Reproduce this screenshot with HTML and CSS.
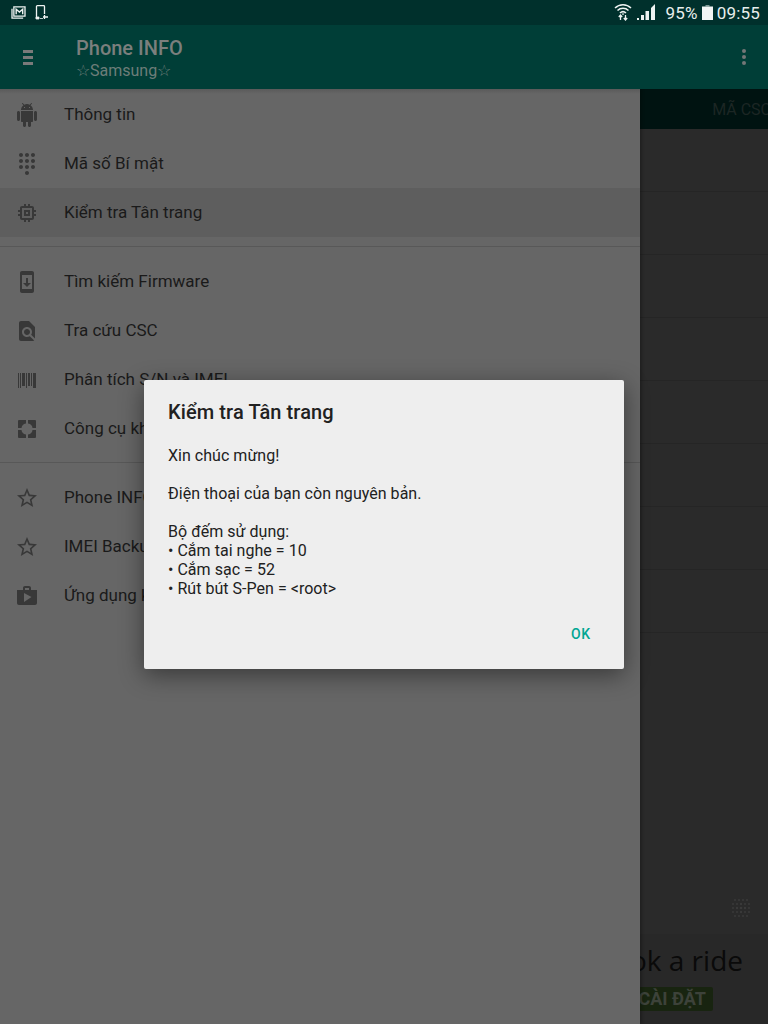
FILE: index.html
```html
<!DOCTYPE html>
<html lang="vi">
<head>
<meta charset="utf-8">
<title>Phone INFO</title>
<link rel="stylesheet" href="styles.css">
</head>
<body>
<div class="screen">
  <header class="status">
    <div class="status-left">
      <svg class="st-mail" viewBox="0 0 16 14"><path d="M3 1h12v10H3z M1 3v10h12" fill="none" stroke="#eef3f2" stroke-width="1.4"/><path d="M5.5 9V3.5L9 6.5l3.5-3V9" fill="none" stroke="#eef3f2" stroke-width="1.5"/></svg>
      <svg class="st-dev" viewBox="0 0 14 15"><path d="M1.5 13.5V1.500a.8.8 0 0 1 .8-.8h6.400a.8.8 0 0 1 .8.800V9" fill="none" stroke="#eef3f2" stroke-width="1.3"/><path d="M1 12h3v2H1z M5 13.500h3" stroke="#eef3f2" fill="#eef3f2" stroke-width=".8"/><path d="M9.500 10v4M8 12h5" stroke="#eef3f2" stroke-width="1.3" fill="none"/></svg>
    </div>
    <div class="status-right">
      <svg class="st-wifi" viewBox="0 0 18 18"><g fill="none" stroke="#eef3f2" stroke-width="1.500"><path d="M1 5c4.500-4.500 11.500-4.500 16 0"/><path d="M3.500 7.500c3-3 8-3 11 0"/><path d="M6 10c1.700-1.600 4.300-1.600 6 0"/></g><path d="M7.500 10.500h3L9 12.300z" fill="#eef3f2"/><path d="M6.500 12v5M4.800 14l1.700-2 1.700 2M11.500 12v5M9.800 15l1.700 2 1.700-2" fill="none" stroke="#eef3f2" stroke-width="1.300"/></svg>
      <svg class="st-signal" viewBox="0 0 18 16"><path d="M0 16h2v-2H0zM4 16h3v-5H4zM8.500 16h3.500V7H8.500zM14 16h4V0l-4 4z" fill="#eef3f2"/></svg>
      <span class="pct">95%</span>
      <svg class="st-batt" viewBox="0 0 11 15"><path d="M3.500 0h4v1.500h-4z" fill="#7f9a96"/><path d="M0 1.500h11V15H0z" fill="#f2f5f4"/></svg>
      <span class="clock">09:55</span>
    </div>
  </header>
  <div class="toolbar">
    <div class="burger"><i></i><i></i><i></i></div>
    <div class="titles">
      <div class="app-title">Phone INFO</div>
      <div class="app-sub">☆Samsung☆</div>
    </div>
    <div class="kebab"><i></i><i></i><i></i></div>
  </div>
  <div class="main">
    <nav class="drawer">
      <a class="item"><svg class="ic" viewBox="0 0 24 24"><path d="M6 18c0 .55.45 1 1 1h1v3.500c0 .83.67 1.500 1.500 1.500s1.500-.67 1.500-1.500V19h2v3.500c0 .83.67 1.500 1.500 1.500s1.500-.67 1.500-1.500V19h1c.55 0 1-.45 1-1V8H6v10zM3.500 8C2.670 8 2 8.670 2 9.500v7c0 .83.67 1.500 1.500 1.500S5 17.330 5 16.500v-7C5 8.670 4.330 8 3.500 8zm17 0c-.83 0-1.500.67-1.500 1.500v7c0 .83.67 1.500 1.500 1.500s1.500-.67 1.500-1.500v-7c0-.83-.67-1.500-1.500-1.500zm-4.970-5.840l1.300-1.300c.2-.2.2-.51 0-.71-.2-.2-.51-.2-.71 0l-1.480 1.480C13.850 1.230 12.950 1 12 1c-.96 0-1.860.23-2.660.63L7.850.15c-.2-.2-.51-.2-.71 0-.2.2-.2.51 0 .71l1.310 1.310C6.970 3.260 6 5.010 6 7h12c0-1.990-.97-3.750-2.470-4.840zM10 5H9V4h1v1zm5 0h-1V4h1v1z"/></svg><span>Thông tin</span></a>
      <a class="item"><svg class="ic" viewBox="0 0 24 24"><path d="M12 19c-1.100 0-2 .9-2 2s.9 2 2 2 2-.9 2-2-.9-2-2-2zM6 1c-1.100 0-2 .9-2 2s.9 2 2 2 2-.9 2-2-.9-2-2-2zm0 6c-1.100 0-2 .9-2 2s.9 2 2 2 2-.9 2-2-.9-2-2-2zm0 6c-1.100 0-2 .9-2 2s.9 2 2 2 2-.9 2-2-.9-2-2-2zm12-8c1.100 0 2-.9 2-2s-.9-2-2-2-2 .9-2 2 .9 2 2 2zm-6 8c-1.100 0-2 .9-2 2s.9 2 2 2 2-.9 2-2-.9-2-2-2zm6 0c-1.100 0-2 .9-2 2s.9 2 2 2 2-.9 2-2-.9-2-2-2zm0-6c-1.100 0-2 .9-2 2s.9 2 2 2 2-.9 2-2-.9-2-2-2zm-6 0c-1.100 0-2 .9-2 2s.9 2 2 2 2-.9 2-2-.9-2-2-2zm0-6c-1.100 0-2 .9-2 2s.9 2 2 2 2-.9 2-2-.9-2-2-2z"/></svg><span>Mã số Bí mật</span></a>
      <a class="item active"><svg class="ic" viewBox="0 0 24 24"><path d="M15 9H9v6h6V9zm-2 4h-2v-2h2v2zm8-2V9h-2V7c0-1.100-.9-2-2-2h-2V3h-2v2h-2V3H9v2H7c-1.100 0-2 .9-2 2v2H3v2h2v2H3v2h2v2c0 1.100.9 2 2 2h2v2h2v-2h2v2h2v-2h2c1.100 0 2-.9 2-2v-2h2v-2h-2v-2h2zm-4 6H7V7h10v10z"/></svg><span>Kiểm tra Tân trang</span></a>
      <div class="divider"></div>
      <a class="item"><svg class="ic" viewBox="0 0 24 24"><path fill-rule="evenodd" d="M7 1h10c1.100 0 2 .9 2 2v18c0 1.100-.9 2-2 2H7c-1.100 0-2-.9-2-2V3c0-1.100.9-2 2-2zM7 5v14h10V5z"/><path d="M11 8h2v5h3l-4 4-4-4h3z"/></svg><span>Tìm kiếm Firmware</span></a>
      <a class="item"><svg class="ic" viewBox="0 0 24 24"><path d="M20 19.590V8l-6-6H6c-1.100 0-1.990.9-1.990 2L4 20c0 1.100.89 2 1.990 2H18c.45 0 .85-.15 1.190-.4l-4.430-4.430c-.8.52-1.740.83-2.760.83-2.760 0-5-2.240-5-5s2.240-5 5-5 5 2.240 5 5c0 1.020-.31 1.960-.83 2.750L20 19.590zM9 13c0 1.660 1.340 3 3 3s3-1.340 3-3-1.340-3-3-3-3 1.340-3 3z"/></svg><span>Tra cứu CSC</span></a>
      <a class="item"><svg class="ic" viewBox="0 0 24 24"><path d="M3 5h1v15H3zM5 5h1v15H5zM7 5h3v13H7zM11 5h1v15h-1zM13 5h2v13h-2zM16 5h1v13h-1zM18 5h3v15h-3z"/></svg><span>Phân tích S/N và IMEI</span></a>
      <a class="item"><svg class="ic" viewBox="0 0 24 24"><path d="M4 3h7v3.500L9 7 7 9l-.5 2H3V4a1 1 0 0 1 1-1zM13 3h7a1 1 0 0 1 1 1v7h-3.500L17 9l-2-2-2-.5zM3 13h3.500L7 15l2 2 2 .5V21H4a1 1 0 0 1-1-1zM17.500 13H21v7a1 1 0 0 1-1 1h-7v-3.500l2-.5 2-2z"/></svg><span>Công cụ khác</span></a>
      <div class="divider low"></div>
      <a class="item"><svg class="ic" viewBox="0 0 24 24"><path d="M22 9.240l-7.190-.62L12 2 9.190 8.630 2 9.240l5.460 4.730L5.820 21 12 17.270 18.180 21l-1.630-7.030L22 9.240zM12 15.400l-3.760 2.270 1-4.280-3.320-2.880 4.380-.38L12 6.100l1.710 4.040 4.380.38-3.320 2.880 1 4.280L12 15.400z"/></svg><span>Phone INFO</span></a>
      <a class="item"><svg class="ic" viewBox="0 0 24 24"><path d="M22 9.240l-7.190-.62L12 2 9.190 8.630 2 9.240l5.460 4.730L5.820 21 12 17.270 18.180 21l-1.630-7.030L22 9.240zM12 15.400l-3.760 2.270 1-4.280-3.320-2.880 4.380-.38L12 6.100l1.710 4.040 4.380.38-3.320 2.880 1 4.280L12 15.400z"/></svg><span>IMEI Backup</span></a>
      <a class="item"><svg class="ic" viewBox="0 0 24 24"><path d="M16 6V4c0-1.110-.89-2-2-2h-4c-1.110 0-2 .89-2 2v2H2v13c0 1.110.89 2 2 2h16c1.110 0 2-.89 2-2V6h-6zm-6-2h4v2h-4V4zM9 18V9l7.500 4L9 18z"/></svg><span>Ứng dụng khác</span></a>
    </nav>
    <section class="panel">
      <div class="tabs"><span>MÃ CSC</span></div>
      <div class="rows">
        <div class="row"></div><div class="row"></div><div class="row"></div><div class="row"></div>
        <div class="row"></div><div class="row"></div><div class="row"></div><div class="row"></div>
      </div>
      <div class="dots">
        <svg class="dot-grid" viewBox="0 0 22 22"><g fill="#3a3a3a"><circle cx="5" cy="3" r="1"/><circle cx="9" cy="3" r="1"/><circle cx="13" cy="3" r="1"/><circle cx="17" cy="3" r="1"/><circle cx="3" cy="7" r="1"/><circle cx="7" cy="7" r="1"/><circle cx="11" cy="7" r="1.200"/><circle cx="15" cy="7" r="1"/><circle cx="19" cy="7" r="1"/><circle cx="3" cy="11" r="1"/><circle cx="7" cy="11" r="1.200"/><circle cx="11" cy="11" r="1.300"/><circle cx="15" cy="11" r="1.200"/><circle cx="19" cy="11" r="1"/><circle cx="3" cy="15" r="1"/><circle cx="7" cy="15" r="1"/><circle cx="11" cy="15" r="1.200"/><circle cx="15" cy="15" r="1"/><circle cx="19" cy="15" r="1"/><circle cx="5" cy="19" r="1"/><circle cx="9" cy="19" r="1"/><circle cx="13" cy="19" r="1"/><circle cx="17" cy="19" r="1"/></g></svg>
      </div>
      <div class="ad">
        <div class="ad-text">Book a ride</div>
        <div class="ad-cta"><span class="ad-btn">CÀI ĐẶT</span></div>
      </div>
    </section>
  </div>
  <div class="dialog">
    <h2 class="dlg-title">Kiểm tra Tân trang</h2>
    <div class="dlg-body">
      <p>Xin chúc mừng!</p>
      <p>Điện thoại của bạn còn nguyên bản.</p>
      <p>Bộ đếm sử dụng:<br>• Cắm tai nghe = 10<br>• Cắm sạc = 52<br>• Rút bút S-Pen = &lt;root&gt;</p>
    </div>
    <div class="dlg-actions"><span class="ok">OK</span></div>
  </div>
</div>
</body>
</html>
```
FILE: styles.css
```css
* { box-sizing: border-box; }
html, body { margin: 0; padding: 0; }
body { font-family: Roboto, "Liberation Sans", sans-serif; background: #2a2a2a; }
.screen { position: relative; width: 768px; height: 1024px; overflow: hidden; display: flex; flex-direction: column; }

.status { height: 25px; flex: none; background: #00302c; display: flex; justify-content: space-between; align-items: center; color: #e8eeed; }
.status-left { display: flex; align-items: center; padding-left: 11px; gap: 9px; }
.st-mail { width: 15px; height: 13px; }
.st-dev { width: 14px; height: 15px; }
.status-right { display: flex; align-items: center; padding-right: 8px; font-size: 17px; letter-spacing: .2px; }
.st-wifi { width: 18px; height: 18px; margin-right: 5px; margin-top: -2px; }
.st-signal { width: 18px; height: 16px; margin-right: 10px; margin-top: -2px; }
.pct { margin-right: 4px; }
.st-batt { width: 11px; height: 15px; margin-right: 4px; }

.toolbar { height: 64px; flex: none; background: #003e37; display: flex; align-items: center; position: relative; z-index: 2; }
.burger { width: 10px; margin-left: 23px; display: flex; flex-direction: column; gap: 3px; }
.burger i { display: block; height: 3px; background: #7a7a7a; }
.titles { margin-left: 43px; flex: 1; padding-top: 1px; }
.app-title { font-size: 20px; font-weight: 500; line-height: 24px; color: #7b7f7d; }
.app-sub { font-size: 16px; line-height: 19px; color: #6d7d79; margin-top: 1px; }
.kebab { width: 4px; margin-right: 22px; display: flex; flex-direction: column; gap: 2px; }
.kebab i { display: block; width: 4px; height: 4px; border-radius: 50%; background: #737777; }

.main { flex: 1; display: flex; min-height: 0; }
.drawer { width: 640px; flex: none; background: #666666; padding-top: 1px; position: relative; z-index: 1; box-shadow: 2px 0 3px rgba(0,0,0,.25); background-image: linear-gradient(#5a5a5a, #666666 5px); }
.item { height: 49px; display: flex; align-items: center; font-size: 17px; color: #1a1a1a; }
.item span { white-space: nowrap; margin-bottom: 2px; }
.item.active { background: #5e5e5e; }
.ic { width: 24px; height: 24px; margin-left: 15px; margin-right: 25px; fill: #383838; flex: none; }
.divider { height: 1px; background: #585858; margin: 9px 0 10px; }
.divider.low { margin: 9px 0 10px; }

.panel { flex: 1; min-width: 0; overflow: hidden; background: #2a2a2a; display: flex; flex-direction: column; }
.tabs { height: 40px; flex: none; background: #001311; display: flex; justify-content: flex-end; align-items: center; overflow: hidden; }
.tabs span { font-size: 16px; color: #1c2624; white-space: nowrap; margin-right: -3px; }
.row { height: 63px; border-bottom: 1px solid #252525; }
.dots { flex: 1; display: flex; justify-content: flex-end; align-items: flex-end; padding: 0 16px 15px 0; }
.dot-grid { width: 22px; height: 22px; }
.ad { height: 90px; flex: none; background: #282828; }
.ad-text { display: flex; justify-content: flex-end; font-family: "Open Sans", sans-serif; font-size: 28px; line-height: 38px; color: #0a0a0a; white-space: nowrap; padding: 7px 25px 0 0; }
.ad-cta { display: flex; justify-content: flex-end; padding: 8px 55px 0 0; }
.ad-btn { flex: none; height: 24px; padding: 0 7px 0 30px; background: #182410; border-radius: 2px; font-size: 18px; font-weight: 700; line-height: 23px; color: #3d423a; white-space: nowrap; }

.dialog { position: absolute; left: 144px; top: 380px; width: 480px; height: 289px; z-index: 5; background: #eeeeee; border-radius: 2px; box-shadow: 0 6px 24px rgba(0,0,0,.45); padding: 20px 24px 0; display: flex; flex-direction: column; }
.dlg-title { margin: 0; font-size: 20px; font-weight: 500; line-height: 24px; letter-spacing: .1px; color: #212121; }
.dlg-body { margin-top: 22px; font-size: 16px; line-height: 19px; letter-spacing: .03px; color: #212121; }
.dlg-body p { margin: 0 0 19px; }
.dlg-actions { display: flex; justify-content: flex-end; margin-top: 7px; padding-right: 9px; }
.ok { font-size: 14px; font-weight: 500; letter-spacing: .8px; line-height: 20px; color: #00a693; }
```
